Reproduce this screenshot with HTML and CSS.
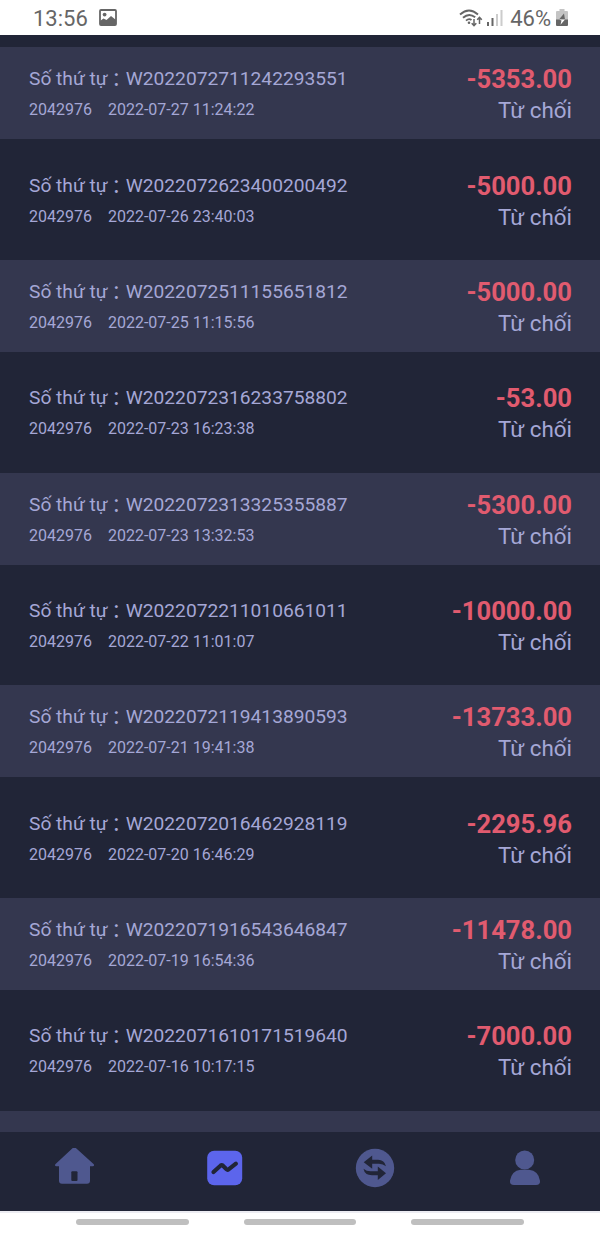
FILE: index.html
```
<!DOCTYPE html>
<html lang="vi">
<head>
    <meta charset="UTF-8">
    <meta name="viewport" content="width=device-width, initial-scale=1.0">
    <title>Lịch sử</title>
    <link rel="stylesheet" href="styles.css">
</head>
<body>
    <div class="status-bar">
        <span class="time">13:56</span>
        <svg class="photo" width="18" height="17" viewBox="0 0 18 17">
            <rect x="1" y="1" width="16" height="15" rx="1" fill="none" stroke="#666" stroke-width="1.8"/>
            <circle cx="5.600" cy="5.600" r="1.900" fill="#666"/>
            <path d="M1 12l3.500-2.500 3 1.500L12 7l5 4v5H1z" fill="#666"/>
        </svg>
        <div class="status-right">
            <svg width="24" height="20" viewBox="0 0 24 20" fill="none" stroke="#666">
                <path d="M1 6.500Q10 -1.500 19 6.500M4 9.700Q10 4.300 16.200 9.300M7 12.600Q10 10 12.500 12" stroke-width="1.9"/>
                <circle cx="10" cy="14.800" r="1.3" fill="#666" stroke="none"/>
                <path d="M15 11v6.500M12.700 15.200l2.300 2.400 2.300-2.400M20.500 16v-6.500M18.200 11.800l2.300-2.400 2.300 2.400" stroke-width="1.5"/>
            </svg>
            <svg class="signal" width="16" height="18" viewBox="0 0 16 18">
                <path d="M0 13h2v4H0zM4.500 9h2v8h-2z" fill="#666"/>
                <path d="M9 5h2v12H9zM13.500 1h2v16h-2z" fill="#ccc"/>
            </svg>
            <span class="percent">46%</span>
            <svg class="battery" width="12" height="18" viewBox="0 0 12 18">
                <path d="M3.500 0h5v2H11q1 0 1 1v8H0V3q0-1 1-1h2.500z" fill="#c4c4c4"/>
                <path d="M0 10.500h12V16q0 1-1 1H1q-1 0-1-1z" fill="#666"/>
                <path d="M8 4.500L3 10.500h6z" fill="#666"/>
                <path d="M3 10.500h6L4.500 15.700 5.500 11.500z" fill="#fff"/>
            </svg>
        </div>
    </div>

    <div class="list">
        <div class="item">
            <div class="info">
                <p class="order">Số thứ tự<span class="colon">：</span>W2022072711242293551</p>
                <p class="detail"><span>2042976</span><span>2022-07-27 11:24:22</span></p>
            </div>
            <div class="result">
                <p class="amount">-5353.00</p>
                <p class="state">Từ chối</p>
            </div>
        </div>
        <div class="item">
            <div class="info">
                <p class="order">Số thứ tự<span class="colon">：</span>W2022072623400200492</p>
                <p class="detail"><span>2042976</span><span>2022-07-26 23:40:03</span></p>
            </div>
            <div class="result">
                <p class="amount">-5000.00</p>
                <p class="state">Từ chối</p>
            </div>
        </div>
        <div class="item">
            <div class="info">
                <p class="order">Số thứ tự<span class="colon">：</span>W2022072511155651812</p>
                <p class="detail"><span>2042976</span><span>2022-07-25 11:15:56</span></p>
            </div>
            <div class="result">
                <p class="amount">-5000.00</p>
                <p class="state">Từ chối</p>
            </div>
        </div>
        <div class="item">
            <div class="info">
                <p class="order">Số thứ tự<span class="colon">：</span>W2022072316233758802</p>
                <p class="detail"><span>2042976</span><span>2022-07-23 16:23:38</span></p>
            </div>
            <div class="result">
                <p class="amount">-53.00</p>
                <p class="state">Từ chối</p>
            </div>
        </div>
        <div class="item">
            <div class="info">
                <p class="order">Số thứ tự<span class="colon">：</span>W2022072313325355887</p>
                <p class="detail"><span>2042976</span><span>2022-07-23 13:32:53</span></p>
            </div>
            <div class="result">
                <p class="amount">-5300.00</p>
                <p class="state">Từ chối</p>
            </div>
        </div>
        <div class="item">
            <div class="info">
                <p class="order">Số thứ tự<span class="colon">：</span>W2022072211010661011</p>
                <p class="detail"><span>2042976</span><span>2022-07-22 11:01:07</span></p>
            </div>
            <div class="result">
                <p class="amount">-10000.00</p>
                <p class="state">Từ chối</p>
            </div>
        </div>
        <div class="item">
            <div class="info">
                <p class="order">Số thứ tự<span class="colon">：</span>W2022072119413890593</p>
                <p class="detail"><span>2042976</span><span>2022-07-21 19:41:38</span></p>
            </div>
            <div class="result">
                <p class="amount">-13733.00</p>
                <p class="state">Từ chối</p>
            </div>
        </div>
        <div class="item">
            <div class="info">
                <p class="order">Số thứ tự<span class="colon">：</span>W2022072016462928119</p>
                <p class="detail"><span>2042976</span><span>2022-07-20 16:46:29</span></p>
            </div>
            <div class="result">
                <p class="amount">-2295.96</p>
                <p class="state">Từ chối</p>
            </div>
        </div>
        <div class="item">
            <div class="info">
                <p class="order">Số thứ tự<span class="colon">：</span>W2022071916543646847</p>
                <p class="detail"><span>2042976</span><span>2022-07-19 16:54:36</span></p>
            </div>
            <div class="result">
                <p class="amount">-11478.00</p>
                <p class="state">Từ chối</p>
            </div>
        </div>
        <div class="item">
            <div class="info">
                <p class="order">Số thứ tự<span class="colon">：</span>W2022071610171519640</p>
                <p class="detail"><span>2042976</span><span>2022-07-16 10:17:15</span></p>
            </div>
            <div class="result">
                <p class="amount">-7000.00</p>
                <p class="state">Từ chối</p>
            </div>
        </div>
        <div class="item"></div>
    </div>

    <div class="tabs">
        <a class="tab">
            <svg width="40" height="40" viewBox="0 2 40 40">
                <path d="M18.300 1.500q1-.8 2 0L38.800 18.300q.8 2-1 2H35V34.800q0 3-3 3H7q-3 0-3-3V20.300H1.300q-1.800 0-1-2z" fill="#4f588f"/>
                <rect x="16.300" y="25.200" width="6.200" height="9.800" rx="1" fill="#212537"/>
            </svg>
        </a>
        <a class="tab">
            <svg width="40" height="40" viewBox="0 0 40 40">
                <rect x="2.200" y="2.700" width="35" height="34.500" rx="7" fill="#5c65ec"/>
                <path d="M8.500 24l7.200-6.500q1-.8 2 0l3.800 3.800q1 .9 2.100 0l7.300-5.600" fill="none" stroke="#212537" stroke-width="4.200" stroke-linecap="round"/>
            </svg>
        </a>
        <a class="tab">
            <svg width="40" height="40" viewBox="0 0 40 40">
                <circle cx="20" cy="20" r="19.200" fill="#4f588f"/>
                <path d="M8.700 14.300L17.200 7.500v4.300H23q6.500 0 8 6.500-3-2.500-7-2.500h-6.800v5z" fill="#212537"/>
                <path d="M31 25.200L22.800 32v-4.800H17q-7.300 0-8.500-6.500 3 2.500 7 2.500h7.300v-4.700z" fill="#212537"/>
            </svg>
        </a>
        <a class="tab">
            <svg width="40" height="40" viewBox="0 0 40 40">
                <circle cx="19.700" cy="12" r="9.500" fill="#4f588f"/>
                <path d="M15.500 21.700h8.500q9.500 1 11 11 .3 4.300-4 4.300H9q-4.300 0-4-4.300 1.500-10 10.500-11z" fill="#4f588f"/>
            </svg>
        </a>
    </div>

    <div class="system-nav">
        <span></span>
        <span></span>
        <span></span>
    </div>
</body>
</html>
```
FILE: styles.css
```
* {
    box-sizing: border-box;
}
body {
    margin: 0;
    width: 600px;
    height: 1233px;
    display: flex;
    flex-direction: column;
    overflow: hidden;
    font-family: Roboto, "Noto Sans CJK JP", sans-serif;
    background-color: #212537;
}
p {
    margin: 0;
}
.status-bar {
    height: 35px;
    flex-shrink: 0;
    display: flex;
    align-items: center;
    padding: 0 32px 0 33px;
    background: white;
    color: #666;
    font-size: 22px;
}
.time {
    padding-top: 2px;
}
.photo {
    margin-left: 11px;
}
.status-right {
    margin-left: auto;
    display: flex;
    align-items: center;
}
.signal {
    margin: 0 7px 0 4px;
}
.percent {
    padding-top: 2px;
}
.battery {
    margin-left: 5px;
}
.list {
    flex: 1;
    min-height: 0;
    overflow: hidden;
    padding-top: 12.3px;
}
.item {
    height: 92px;
    margin-bottom: 14.35px;
    padding: 16px 28px 0 29px;
    display: flex;
    justify-content: space-between;
    color: #a5a7d6;
}
.item:nth-child(odd) {
    background-color: #34374f;
}
.order {
    font-size: 19.2px;
    line-height: 31px;
}
/* full-width colon sits a bit high next to Roboto */
.colon {
    display: inline-block;
    line-height: 1;
    width: 18px;
    transform: translate(-1px, 2px);
}
.detail {
    display: flex;
    gap: 16px;
    font-size: 16px;
    line-height: 31px;
}
.result {
    text-align: right;
}
.amount {
    color: #e15b6f;
    font-size: 25.6px;
    font-weight: bold;
    line-height: 32px;
}
.state {
    font-size: 22.4px;
    line-height: 30px;
}
.tabs {
    height: 79px;
    flex-shrink: 0;
    display: flex;
    background-color: #212537;
}
.tab {
    flex: 1;
    display: flex;
    justify-content: center;
    padding-top: 16px;
}
.system-nav {
    height: 22px;
    flex-shrink: 0;
    display: flex;
    justify-content: center;
    gap: 55px;
    padding-top: 6px;
    background: white;
    border-top: 2px solid #ececf2;
}
.system-nav span {
    width: 112.5px;
    height: 5.5px;
    border-radius: 3px;
    background: #bfbfbf;
}
```
